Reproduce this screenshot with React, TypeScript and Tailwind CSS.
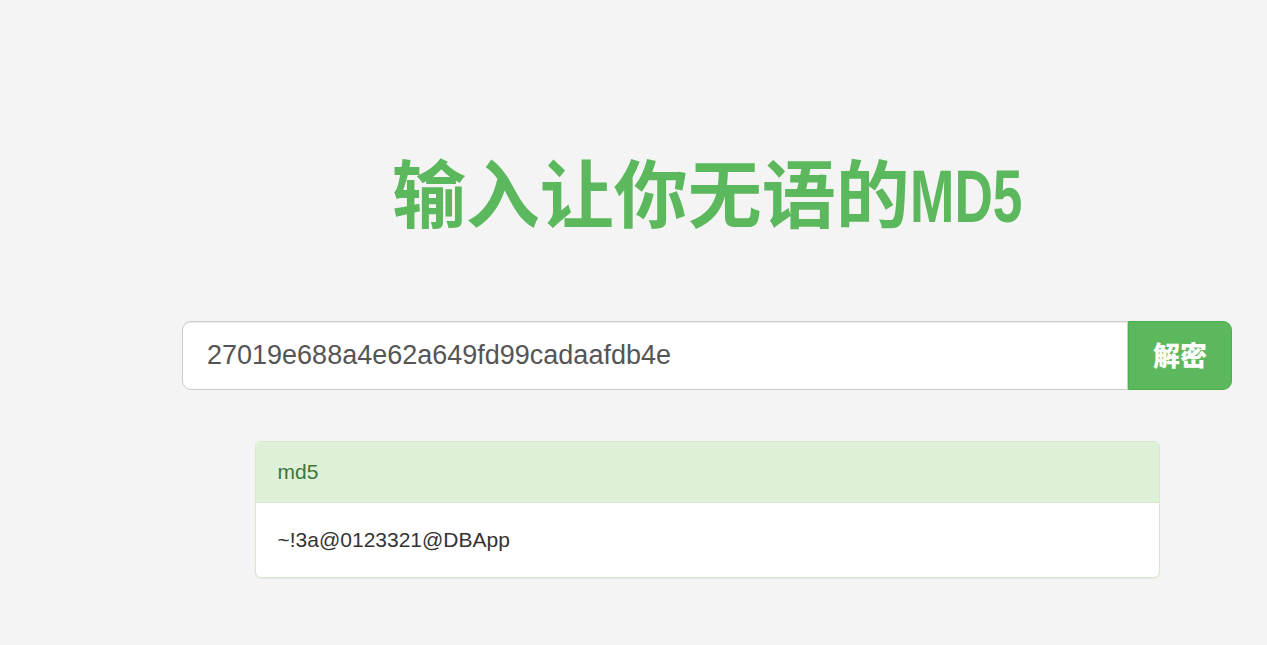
export default function App() {
  return (
    <div className="min-h-screen w-full bg-[#f4f4f4] font-['Liberation_Sans','Noto_Sans_CJK_SC',sans-serif]">
      <div className="ml-[182px] w-[1050px] pt-[153px]">
        <h1 className="h-[74px] text-center font-['Noto_Sans_CJK_SC',sans-serif] text-[74px] font-bold leading-none text-[#5cb85c]">
          输入让你无语的
          <span className="mr-[-44px] inline-block origin-left scale-x-[0.72] font-['Liberation_Sans',sans-serif]">
            MD5
          </span>
        </h1>

        <div className="mt-[94px] flex h-[69px]">
          <input
            readOnly
            value="27019e688a4e62a649fd99cadaafdb4e"
            className="h-full flex-1 rounded-l-[9px] border border-[#cccccc] bg-white px-[24px] text-[27px] text-[#555555] shadow-[inset_0_1px_1px_rgba(0,0,0,0.075)] outline-none"
          />
          <button className="h-full w-[104px] rounded-r-[9px] border border-[#4cae4c] bg-[#5cb85c] font-['Noto_Sans_CJK_SC',sans-serif] text-[27px] font-black text-white">
            解密
          </button>
        </div>

        <div className="mx-auto mt-[51px] w-[905px] overflow-hidden rounded-[6px] border border-[#d6e9c6] bg-white shadow-[0_1px_1px_rgba(0,0,0,0.05)]">
          <div className="border-b border-[#d6e9c6] bg-[#dff0d8] px-[22px] py-[15px] text-[21px] leading-[30px] text-[#3c763d]">
            md5
          </div>
          <div className="px-[22px] py-[22px] text-[21px] leading-[30px] text-[#333333]">
            ~!3a@0123321@DBApp
          </div>
        </div>
      </div>
    </div>
  );
}
